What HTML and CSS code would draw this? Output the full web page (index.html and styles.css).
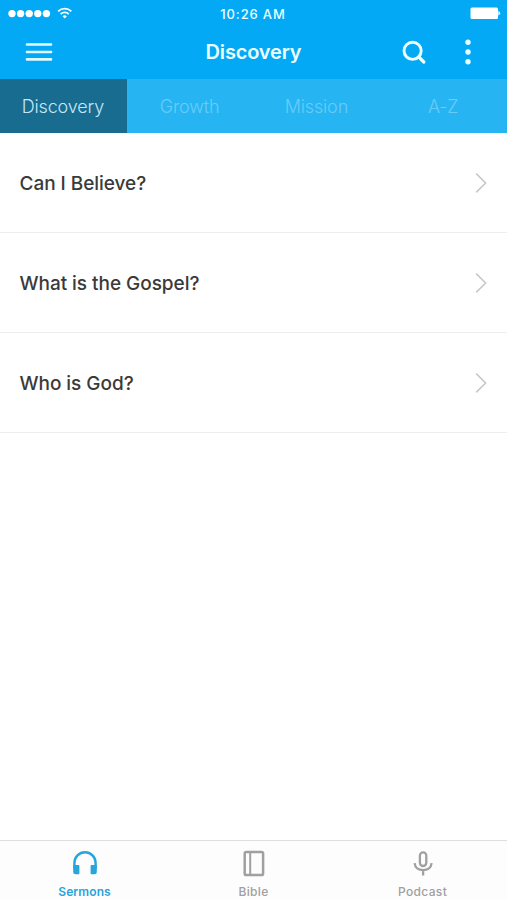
FILE: index.html
```html
<!DOCTYPE html>
<html lang="en">
<head>
  <meta charset="UTF-8">
  <meta name="viewport" content="width=device-width, initial-scale=1.0">
  <title>Discovery</title>
  <link rel="stylesheet" href="styles.css">
</head>
<body>
  <header>
    <div class="status-bar">
      <svg class="signal" width="66" height="16" viewBox="0 0 66 16">
        <g fill="#fff">
          <circle cx="4" cy="7.6" r="3.7"/>
          <circle cx="12.6" cy="7.6" r="3.7"/>
          <circle cx="21.2" cy="7.6" r="3.7"/>
          <circle cx="29.8" cy="7.6" r="3.7"/>
          <circle cx="38.4" cy="7.6" r="3.7"/>
          <path d="M56.7 12.5l-2.1-2.2a3 3 0 0 1 4.2 0z"/>
        </g>
        <g fill="none" stroke="#fff" stroke-width="1.8">
          <path d="M50.1 5.3a9.4 9.4 0 0 1 13.2 0"/>
          <path d="M52.6 8.1a5.9 5.9 0 0 1 8.2 0"/>
        </g>
      </svg>
      <span class="time">10:26 AM</span>
      <svg class="battery" width="31" height="14" viewBox="0 0 31 14">
        <rect x="0.5" y="0.4" width="27.5" height="11.7" rx="1.5" fill="#fff"/>
        <path d="M28.4 3.8q3.4 2.4 0 4.8z" fill="#fff"/>
      </svg>
    </div>
    <div class="nav-bar">
      <svg class="menu" width="28" height="20" viewBox="0 0 28 20">
        <path d="M2 2.5h24M2 10h24M2 17.4h24" stroke="#e0fbff" stroke-width="2.7" stroke-linecap="round"/>
      </svg>
      <h1>Discovery</h1>
      <div class="actions">
        <svg width="24" height="24" viewBox="0 0 24 24" fill="none" stroke="#eaffff">
          <circle cx="10.6" cy="10.8" r="8.6" stroke-width="2.9"/>
          <path d="M16.8 17l5 5" stroke-width="3.2" stroke-linecap="round"/>
        </svg>
        <svg width="6" height="26" viewBox="0 0 6 26" fill="#eaffff">
          <circle cx="3" cy="3.3" r="2.7"/>
          <circle cx="3" cy="13" r="2.7"/>
          <circle cx="3" cy="22.7" r="2.7"/>
        </svg>
      </div>
    </div>
    <nav class="tabs">
      <a class="tab active">Discovery</a>
      <a class="tab">Growth</a>
      <a class="tab">Mission</a>
      <a class="tab">A-Z</a>
    </nav>
  </header>

  <main>
    <div class="row">
      <span class="row-title">Can I Believe?</span>
      <svg width="12" height="22" viewBox="0 0 12 22"><path d="M1.2 1.6l9.4 9.4-9.4 9.4"/></svg>
    </div>
    <div class="row">
      <span class="row-title">What is the Gospel?</span>
      <svg width="12" height="22" viewBox="0 0 12 22"><path d="M1.2 1.6l9.4 9.4-9.4 9.4"/></svg>
    </div>
    <div class="row">
      <span class="row-title">Who is God?</span>
      <svg width="12" height="22" viewBox="0 0 12 22"><path d="M1.2 1.6l9.4 9.4-9.4 9.4"/></svg>
    </div>
  </main>

  <footer>
    <a class="item selected">
      <svg width="28" height="28" viewBox="0 0 28 28">
        <path d="M3.4 20v-6.2a10.6 10.6 0 0 1 21.2 0V20" fill="none" stroke="currentColor" stroke-width="2.4"/>
        <path d="M2.2 16h5.2q1 0 1 1v7.2q0 1-1 1H4.7a2.5 2.5 0 0 1-2.5-2.5zM25.8 16h-5.2q-1 0-1 1v7.2q0 1 1 1h2.7a2.5 2.5 0 0 0 2.5-2.5z" fill="currentColor"/>
      </svg>
      <span>Sermons</span>
    </a>
    <a class="item">
      <svg width="28" height="28" viewBox="0 0 28 28" fill="none" stroke="currentColor">
        <rect x="4.7" y="3" width="18.4" height="23" rx="1.6" stroke-width="2.5"/>
        <path d="M10.2 3v23" stroke-width="2"/>
      </svg>
      <span>Bible</span>
    </a>
    <a class="item">
      <svg width="28" height="28" viewBox="0 0 28 28" fill="none" stroke="currentColor" stroke-width="2.3">
        <rect x="10.9" y="3.4" width="6.4" height="13.6" rx="3.2"/>
        <path d="M5.6 14.2c.4 4.4 3.9 7 8.5 7s8.1-2.6 8.5-7M14.1 21v5.6"/>
      </svg>
      <span>Podcast</span>
    </a>
  </footer>
</body>
</html>
```
FILE: styles.css
```css
body {
  font-family: Inter, 'Liberation Sans', sans-serif;
  margin: 0;
  min-height: 100vh;
  display: flex;
  flex-direction: column;
  background-color: #fff;
  color: #3a3a3a;
}
header {
  background-color: #03a9f4;
  color: #eaffff;
}
.status-bar {
  display: grid;
  grid-template-columns: 1fr auto 1fr;
  align-items: center;
  height: 27px;
  padding: 0 6px 0 8px;
}
.time {
  margin-right: 3px;
  font-size: 13px;
  font-weight: 500;
  letter-spacing: 0.85px;
}
.battery {
  justify-self: end;
}
.nav-bar {
  display: grid;
  grid-template-columns: 1fr auto 1fr;
  align-items: center;
  height: 52px;
  padding: 0 25px 2px;
  box-sizing: border-box;
}
.nav-bar h1 {
  margin: 0;
  font-size: 20px;
  font-weight: 600;
  line-height: 24px;
  letter-spacing: -0.15px;
}
.actions {
  display: flex;
  align-items: center;
  justify-content: flex-end;
  gap: 39px;
  padding-right: 11px;
}
.tabs {
  display: grid;
  grid-template-columns: repeat(4, 1fr);
  height: 53.5px;
  background-color: #27b4f2;
}
.tab {
  display: flex;
  align-items: center;
  justify-content: center;
  padding: 1px 1px 0 0;
  font-size: 18px;
  font-weight: 300;
  letter-spacing: -0.15px;
  color: #68ccf8;
}
.tab.active {
  background-color: #186c90;
  color: #c4e8f8;
}
main {
  flex: 1;
}
.row {
  display: flex;
  align-items: center;
  justify-content: space-between;
  height: 100.2px;
  padding: 2px 20px 0 19.5px;
  border-bottom: 1px solid #eee;
  box-sizing: border-box;
}
.row-title {
  font-size: 19px;
  font-weight: 500;
  letter-spacing: -0.04px;
}
.row svg {
  fill: none;
  stroke: #c9c9cb;
  stroke-width: 1.6;
}
footer {
  display: grid;
  grid-template-columns: repeat(3, 1fr);
  height: 60px;
  border-top: 1px solid #dedede;
  box-sizing: border-box;
  background-color: #fdfdfd;
}
.item {
  display: flex;
  flex-direction: column;
  align-items: center;
  padding-top: 8px;
  font-size: 12px;
  font-weight: 500;
  line-height: 15px;
  letter-spacing: 0.35px;
  color: #a0a0a0;
}
.item span {
  margin-top: 7px;
}
.item.selected {
  font-weight: 600;
  letter-spacing: 0.1px;
  color: #27a5dc;
}
```
